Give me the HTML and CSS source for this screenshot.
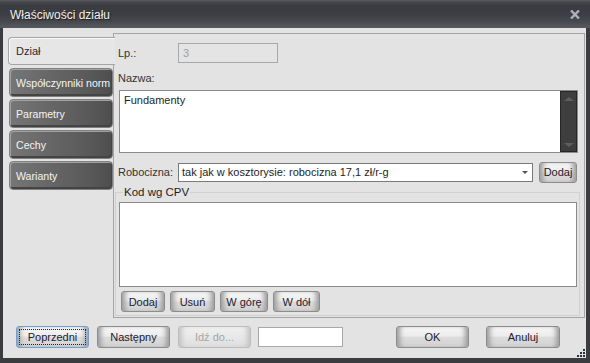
FILE: index.html
```html
<!DOCTYPE html>
<html lang="pl">
<head>
  <meta charset="UTF-8" />
  <title>Właściwości działu</title>
  <link rel="stylesheet" href="styles.css">
</head>
<body>
  <div class="window">
    <div class="titlebar">
      <span class="title">Właściwości działu</span>
      <svg class="close" width="10" height="9" viewBox="0 0 10 9">
        <path d="M1 0.5 L9 8.5 M9 0.5 L1 8.5" stroke="#aab2ba" stroke-width="2.4" />
      </svg>
    </div>

    <div class="client">
      <div class="main">
        <div class="tabs">
          <div class="tab active">Dział</div>
          <div class="tab">Współczynniki norm</div>
          <div class="tab">Parametry</div>
          <div class="tab">Cechy</div>
          <div class="tab">Warianty</div>
        </div>

        <div class="panel">
          <div class="row row-lp">
            <span class="label">Lp.:</span>
            <div class="field disabled">3</div>
          </div>

          <div class="label nazwa-label">Nazwa:</div>
          <div class="memo">
            <div class="memo-text">Fundamenty</div>
            <div class="scrollbar">
              <span class="arrow up"></span>
              <span class="arrow down"></span>
            </div>
          </div>

          <div class="row row-rob">
            <span class="label">Robocizna:</span>
            <div class="combo">
              <span>tak jak w kosztorysie: robocizna 17,1 zł/r-g</span>
              <span class="combo-arrow"></span>
            </div>
            <button class="btn btn-add">Dodaj</button>
          </div>

          <fieldset class="group">
            <legend>Kod wg CPV</legend>
            <div class="list"></div>
            <div class="group-buttons">
              <button class="btn w-44">Dodaj</button>
              <button class="btn w-45">Usuń</button>
              <button class="btn w-48">W górę</button>
              <button class="btn w-47">W dół</button>
            </div>
          </fieldset>
        </div>
      </div>

      <div class="footer">
        <button class="btn nav focused">Poprzedni</button>
        <button class="btn nav">Następny</button>
        <button class="btn nav" disabled>Idź do...</button>
        <div class="field goto"></div>
        <button class="btn nav ok">OK</button>
        <button class="btn nav cancel">Anuluj</button>
      </div>

      <svg class="grip" width="9" height="9" viewBox="0 0 9 9">
        <rect x="7" y="1" width="2" height="2" fill="#2e3038" />
        <rect x="4" y="4" width="2" height="2" fill="#2e3038" />
        <rect x="7" y="4" width="2" height="2" fill="#2e3038" />
        <rect x="1" y="7" width="2" height="2" fill="#2e3038" />
        <rect x="4" y="7" width="2" height="2" fill="#2e3038" />
        <rect x="7" y="7" width="2" height="2" fill="#2e3038" />
      </svg>
    </div>
  </div>
</body>
</html>
```

FILE: styles.css
```css
body {
  margin: 0;
  background: #2f3034;
  font-family: "Liberation Sans", Arial, sans-serif;
  font-size: 11px;
  color: #2a2a2a;
}

.window {
  width: 590px;
  height: 363px;
  display: flex;
  flex-direction: column;
  background: #3a3c40;
}

/* Title bar */
.titlebar {
  height: 28px;
  flex: none;
  display: flex;
  align-items: center;
  justify-content: space-between;
  padding: 0 10px 0 10px;
  box-sizing: border-box;
  background: linear-gradient(#5a5d62 0, #45474c 2px, #393b40 6px, #3c3e43 14px, #47494e 22px, #55585e 27px);
}

.title {
  font-size: 12px;
  color: #f0f0f0;
  text-shadow: 1px 1px 1px #1c1c1c;
  margin-top: 1px;
}

/* Client area */
.client {
  flex: 1;
  margin: 0 4px 5px 3px;
  background: #e3e3e3;
  position: relative;
}

.main {
  display: flex;
  padding: 5px 0 0 5px;
}

/* Left tabs */
.tabs {
  width: 105px;
  padding-top: 4px;
  display: flex;
  flex-direction: column;
  position: relative;
  z-index: 1;
}

.tab {
  height: 29px;
  margin: 0 0 2px 1px;
  width: 104px;
  box-sizing: border-box;
  display: flex;
  align-items: center;
  padding-left: 6px;
  font-size: 10.6px;
  color: #f4f4f4;
  white-space: nowrap;
  overflow: hidden;
  border: 1px solid #808080;
  border-radius: 4px;
  background: linear-gradient(to right, #767676, #666 40%, #5a5a5a 75%, #4e4e4e);
  box-shadow: inset 1px 1px 0 #a2a2a2, inset -1px -2px 0 #444;
}

.tab.active {
  height: 28px;
  width: 107px;
  margin: 0 0 3px 0;
  padding-left: 7px;
  font-size: 11px;
  color: #2a2a2a;
  background: #e6e6e6;
  border: 1px solid #a5a5a5;
  border-right: none;
  border-radius: 4px 0 0 4px;
  box-shadow: inset 1px 1px 0 #fafafa;
}

/* Right panel */
.panel {
  width: 472px;
  height: 285px;
  box-sizing: border-box;
  border: 1px solid #a5a5a5;
  padding-left: 4px;
  display: flex;
  flex-direction: column;
}

.row {
  display: flex;
  align-items: center;
}

.label {
  width: 60px;
  flex: none;
  color: #333;
}

.row-lp {
  margin-top: 9px;
  height: 20px;
}

.field {
  width: 100px;
  height: 20px;
  box-sizing: border-box;
  border: 1px solid #a8a8a8;
  background: #fff;
  padding: 3px 4px;
}

.field.disabled {
  background: #e4e4e4;
  color: #a0a0a0;
}

.nazwa-label {
  margin-top: 8px;
  line-height: 14px;
}

.memo {
  margin: 5px 0 0 1px;
  width: 459px;
  height: 63px;
  box-sizing: border-box;
  border: 1px solid #8a8a8a;
  background: #fff;
  display: flex;
}

.memo-text {
  flex: 1;
  padding: 3px 4px;
  color: #1e1e1e;
}

.scrollbar {
  width: 17px;
  box-sizing: border-box;
  border: 1px solid #262626;
  background: #3e3e3e;
  display: flex;
  flex-direction: column;
  justify-content: space-between;
  align-items: center;
  padding: 5px 0 4px;
}

.arrow {
  width: 0;
  height: 0;
  border-left: 5px solid transparent;
  border-right: 5px solid transparent;
}

.arrow.up {
  border-bottom: 4px solid #5e5e5e;
}

.arrow.down {
  border-top: 4px solid #5e5e5e;
}

.row-rob {
  margin-top: 8px;
  height: 22px;
}

.combo {
  width: 355px;
  height: 19px;
  box-sizing: border-box;
  border: 1px solid #7a7a7a;
  background: #fff;
  display: flex;
  align-items: center;
  justify-content: space-between;
  padding: 0 4px 0 3px;
  color: #1e1e1e;
}

.combo-arrow {
  width: 0;
  height: 0;
  border-left: 3px solid transparent;
  border-right: 3px solid transparent;
  border-top: 3px solid #555;
  margin-top: 1px;
}

/* Buttons */
.btn {
  font-family: inherit;
  font-size: 11px;
  color: #1e2030;
  height: 21px;
  padding: 0;
  box-sizing: border-box;
  border: 1px solid #8c8c8c;
  border-radius: 3px;
  background: linear-gradient(#f6f6f6, #ececec 45%, #dcdcdc 52%, #d2d2d2);
  box-shadow: inset 6px 0 5px -3px #9c9c9c, inset -6px 0 5px -3px #9c9c9c;
}

.btn:disabled {
  color: #a6a6a6;
  border-color: #bdbdbd;
  background: linear-gradient(#f0f0f0, #e8e8e8 50%, #dddddd);
  box-shadow: inset 6px 0 5px -3px #c4c4c4, inset -6px 0 5px -3px #c4c4c4;
}

.btn-add {
  width: 38px;
  margin-left: 6px;
}

/* CPV group */
.group {
  margin: 3px 0 0 -3px;
  width: 465px;
  box-sizing: border-box;
  border: 1px solid #d0d0d0;
  padding: 0 2px 3px 3px;
}

.group legend {
  margin-left: 4px;
  padding: 0 1px;
  line-height: 12px;
  color: #1e1e1e;
  font-size: 11.5px;
}

.list {
  margin-top: 4px;
  width: 458px;
  height: 85px;
  box-sizing: border-box;
  border: 1px solid #8a8a8a;
  background: #fff;
}

.group-buttons {
  display: flex;
  gap: 5px;
  margin: 4px 0 0 2px;
}

.w-44 { width: 44px; }
.w-45 { width: 45px; }
.w-47 { width: 47px; }
.w-48 { width: 48px; }

/* Footer */
.footer {
  display: flex;
  align-items: center;
  gap: 8px;
  margin-top: 8px;
  padding-left: 13px;
}

.btn.nav {
  width: 73px;
  height: 22px;
}

.btn.focused {
  border-color: #6c9fd6;
  outline: 1px dotted #222;
  outline-offset: -4px;
}

.field.goto {
  width: 85px;
  height: 20px;
  margin-left: -1px;
}

.btn.ok {
  margin-left: 45px;
}

.btn.cancel {
  width: 74px;
  margin-left: 9px;
}

.grip {
  position: absolute;
  right: 1px;
  bottom: 1px;
}
```
